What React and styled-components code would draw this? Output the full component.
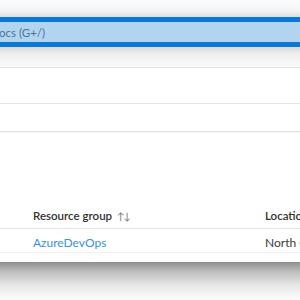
import React from "react";
import styled, { createGlobalStyle } from "styled-components";

const Global = createGlobalStyle`
  html, body { margin: 0; padding: 0; background: #ffffff; }
  body { font-family: Lato, "Noto Sans", sans-serif; }
`;

const Page = styled.div`
  width: 300px;
  height: 300px;
  overflow: hidden;
  display: flex;
  flex-direction: column;
  background: #ffffff;
`;

const TopFade = styled.div`
  height: 17px;
  flex: none;
  background: linear-gradient(to bottom, #fcfcfc 0%, #f4f4f4 60%, #dedede 100%);
`;

const SearchBar = styled.div`
  height: 20px;
  flex: none;
  border-top: 5px solid #0a78d4;
  border-bottom: 5px solid #0a78d4;
  background: #b1d5f1;
  display: flex;
  align-items: center;
`;

const Placeholder = styled.span`
  font-size: 11.5px;
  color: #4f7295;
  white-space: nowrap;
  margin-left: -1px;
`;

const ShadowBand = styled.div`
  height: 20px;
  flex: none;
  background: linear-gradient(to bottom, #d9d9d9 0%, #efefef 35%, #fafafa 100%);
  border-bottom: 1px solid #e2e2e2;
`;

const Band = styled.div`
  height: ${(p) => p.$h}px;
  flex: none;
  background: #ffffff;
  border-bottom: 1px solid #e4e4e4;
  box-shadow: 0 1px 1px rgba(0, 0, 0, 0.04);
`;

const TableArea = styled.div`
  flex: none;
  display: flex;
  flex-direction: column;
  padding-top: ${(p) => p.$top}px;
`;

const Row = styled.div`
  height: ${(p) => p.$h}px;
  padding-top: ${(p) => p.$pt || 0}px;
  display: grid;
  grid-template-columns: 33px 232px 1fr;
  align-items: center;
  border-bottom: 1px solid ${(p) => p.$line};
  font-size: 12px;
  white-space: nowrap;
`;

const HeadCell = styled.div`
  font-weight: 600;
  font-size: 11.5px;
  color: #323130;
  display: flex;
  align-items: center;
`;

const Sort = styled.span`
  font-weight: 400;
  color: #797775;
  font-size: 10px;
  letter-spacing: -1px;
  margin-left: 5px;
`;

const Cell = styled.div`
  color: ${(p) => (p.$link ? "#3a92db" : "#3b3a39")};
`;

const Gap = styled.div`
  height: ${(p) => p.$h}px;
  flex: none;
  background: #fefefe;
`;

const BottomShadow = styled.div`
  flex: 1;
  background: linear-gradient(to bottom, #8e8e8e 0%, #bdbdbd 25%, #e6e6e6 60%, #fdfdfd 100%);
`;

export default function App() {
  return (
    <Page>
      <Global />
      <TopFade />
      <SearchBar>
        <Placeholder>ocs (G+/)</Placeholder>
      </SearchBar>
      <ShadowBand />
      <Band $h={35} />
      <Band $h={27} />
      <TableArea $top={71}>
        <Row $h={25} $line="#e6e6e6">
          <span />
          <HeadCell>
            <span>Resource group</span>
            <Sort>↑↓</Sort>
          </HeadCell>
          <HeadCell>Location</HeadCell>
        </Row>
        <Row $h={19} $pt={4} $line="#f1f1f1">
          <span />
          <Cell $link>AzureDevOps</Cell>
          <Cell>North Central US</Cell>
        </Row>
      </TableArea>
      <Gap $h={9} />
      <BottomShadow />
    </Page>
  );
}
